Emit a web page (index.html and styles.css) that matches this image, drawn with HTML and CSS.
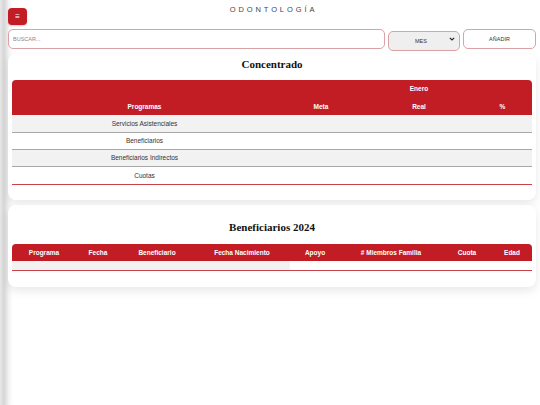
FILE: index.html
```html
<!DOCTYPE html>
<html lang="es">
<head>
    <meta charset="UTF-8">
    <meta name="viewport" content="width=device-width, initial-scale=1.0">
    <title>Odontología</title>
    <link rel="stylesheet" href="styles.css">
</head>
<body>

<div class="page">
    <header class="topbar">
        <button class="menu-btn">&#8801;</button>
        <h1 class="brand">ODONTOLOGÍA</h1>
        <span></span>
    </header>

    <div class="filters">
        <input type="text" class="search" placeholder="BUSCAR...">
        <div class="month-wrap">
            <select class="month">
                <option>MES</option>
            </select>
            <svg class="chevron" width="6" height="4" viewBox="0 0 6 4">
                <path d="M0.8 0.8 L3 3 L5.2 0.8" fill="none" stroke="#222" stroke-width="1.1"/>
            </svg>
        </div>
        <button class="add-btn">AÑADIR</button>
    </div>

    <section class="card">
        <h2 class="card-title">Concentrado</h2>
        <div class="table-wrap">
            <table class="data concentrado">
                <colgroup>
                    <col style="width: 265px">
                    <col style="width: 88px">
                    <col style="width: 108px">
                    <col>
                </colgroup>
                <thead>
                    <tr class="month-row">
                        <th></th>
                        <th></th>
                        <th>Enero</th>
                        <th></th>
                    </tr>
                    <tr>
                        <th>Programas</th>
                        <th>Meta</th>
                        <th>Real</th>
                        <th>%</th>
                    </tr>
                </thead>
                <tbody>
                    <tr><td>Servicios Asistenciales</td><td></td><td></td><td></td></tr>
                    <tr><td>Beneficiarios</td><td></td><td></td><td></td></tr>
                    <tr><td>Beneficiarios Indirectos</td><td></td><td></td><td></td></tr>
                    <tr class="last-row"><td>Cuotas</td><td></td><td></td><td></td></tr>
                </tbody>
            </table>
        </div>
    </section>

    <section class="card card-second">
        <h2 class="card-title">Beneficiarios 2024</h2>
        <div class="table-wrap">
            <table class="data beneficiarios">
                <colgroup>
                    <col style="width: 64px">
                    <col style="width: 44px">
                    <col style="width: 74px">
                    <col style="width: 96px">
                    <col style="width: 50px">
                    <col style="width: 102px">
                    <col style="width: 50px">
                    <col>
                </colgroup>
                <thead>
                    <tr>
                        <th>Programa</th>
                        <th>Fecha</th>
                        <th>Beneficiario</th>
                        <th>Fecha Nacimiento</th>
                        <th>Apoyo</th>
                        <th># Miembros Familia</th>
                        <th>Cuota</th>
                        <th>Edad</th>
                    </tr>
                </thead>
                <tbody>
                    <tr class="empty-row">
                        <td colspan="4" class="shade"></td>
                        <td></td><td></td><td></td><td></td>
                    </tr>
                </tbody>
            </table>
        </div>
    </section>
</div>

</body>
</html>
```

FILE: styles.css
```css
/* Reset basico */
* {
    margin: 0;
    padding: 0;
    box-sizing: border-box;
}

body {
    font-family: "Liberation Sans", Arial, sans-serif;
    background: linear-gradient(to right, #e8e8e8 0, #d6d6d6 4px, #f4f4f4 9px, #fff 13px);
    color: #333;
    min-height: 100vh;
}

.page {
    padding: 8px 4px 0 8px;
}

.topbar {
    display: grid;
    grid-template-columns: 1fr auto 1fr;
    align-items: start;
    height: 21px;
}

.menu-btn {
    width: 19px;
    height: 17px;
    background-color: #c21d25;
    color: #fff;
    border: none;
    border-radius: 4px;
    font-size: 8px;
    line-height: 17px;
    cursor: pointer;
    box-shadow: 0 1px 2px rgba(0, 0, 0, 0.2);
}

.brand {
    font-size: 7.5px;
    font-weight: normal;
    letter-spacing: 2.9px;
    color: #444;
    margin-top: -3px;
    margin-right: -3px;
}

.filters {
    display: flex;
    gap: 3px;
    height: 20px;
}

.filters .search,
.filters .month,
.filters .add-btn {
    height: 20px;
    border: 1px solid #d9a3a5;
    border-radius: 5px;
    font-family: "Liberation Sans", Arial, sans-serif;
    font-size: 5.5px;
    color: #333;
}

.search {
    flex: 1;
    padding: 0 4px;
    background-color: #fff;
}

.search::placeholder {
    color: #888;
}

.month-wrap {
    position: relative;
    width: 72px;
}

.month {
    width: 100%;
    appearance: none;
    background-color: #efefef;
    text-align-last: center;
    padding: 0 6px 0 0;
}

.chevron {
    position: absolute;
    right: 5px;
    top: 8px;
    pointer-events: none;
}

.add-btn {
    width: 73px;
    background-color: #fff;
    cursor: pointer;
}

.card {
    background-color: #fff;
    border-radius: 8px;
    box-shadow: 0 4px 10px rgba(0, 0, 0, 0.09);
    margin-top: 5px;
    padding: 4px 4px 15px;
}

.card-title {
    font-family: "Liberation Serif", "Times New Roman", serif;
    font-size: 11px;
    font-weight: bold;
    text-align: center;
    color: #111;
    line-height: 13px;
    margin-bottom: 9px;
}

.card-second {
    padding-bottom: 16px;
}

.card-second .card-title {
    margin-top: 12px;
    margin-bottom: 10px;
}

.table-wrap {
    border-radius: 4px 4px 0 0;
    overflow: hidden;
}

.data {
    width: 100%;
    border-collapse: collapse;
    table-layout: fixed;
    font-size: 6.5px;
}

.data th {
    background-color: #c21d25;
    color: #fff;
    font-weight: bold;
    text-align: center;
    height: 18px;
}

.data .month-row th {
    height: 17px;
}

.concentrado td {
    height: 17px;
    text-align: center;
    border-bottom: 1px solid #a8a8a8;
}

.concentrado tbody tr:nth-child(odd) td {
    background-color: #f2f2f2;
}

.concentrado .last-row td {
    height: 18px;
    border-bottom: 1px solid #c8424b;
}

.beneficiarios th {
    height: 17px;
}

.empty-row td {
    height: 10px;
    border-bottom: 1px solid #c8424b;
}

.empty-row .shade {
    background-color: #f2f2f2;
}
```
